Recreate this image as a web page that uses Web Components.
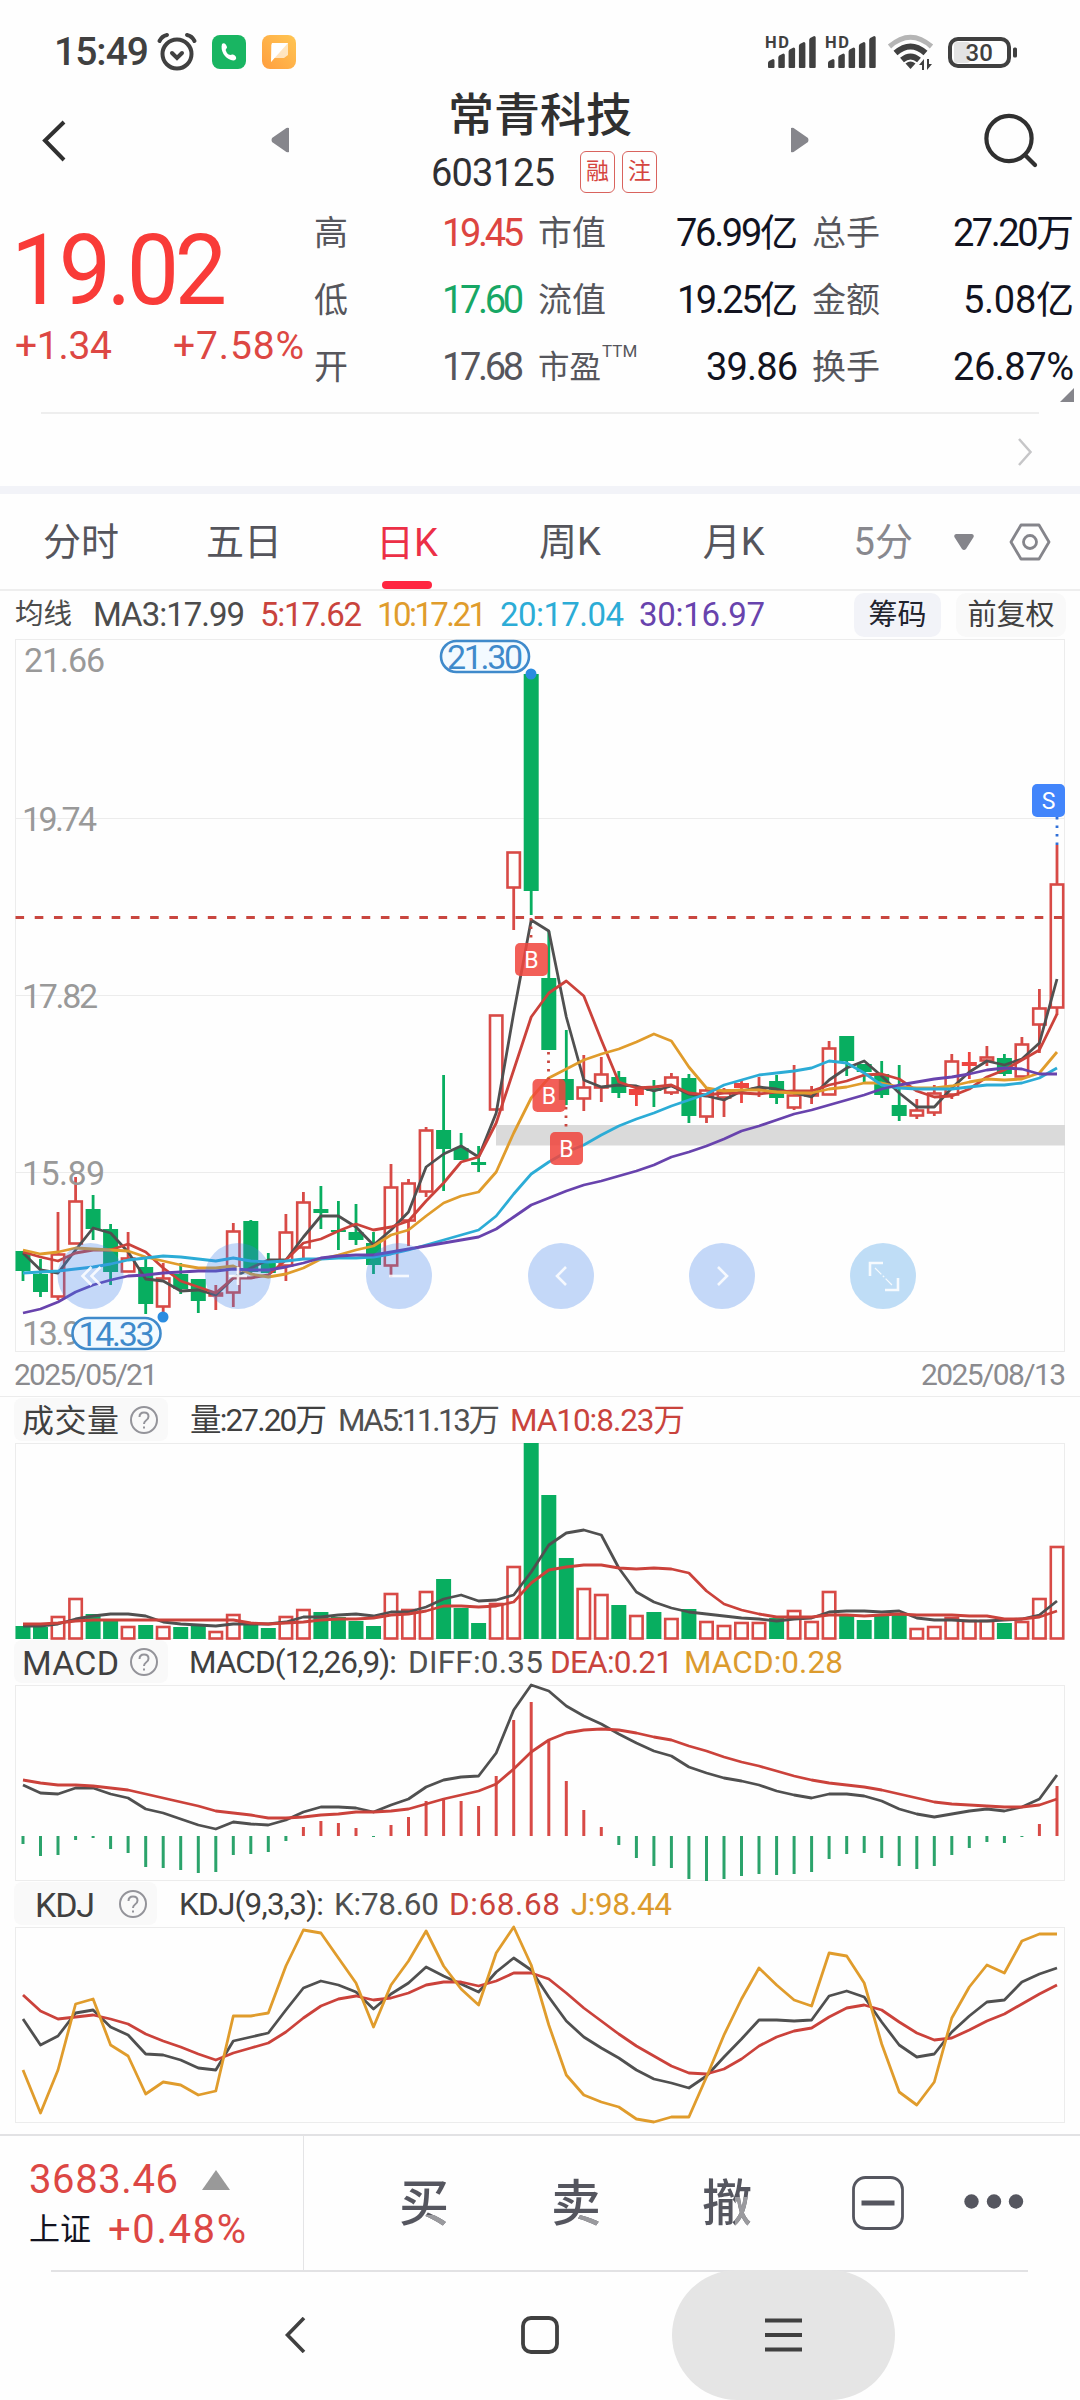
<!DOCTYPE html>
<html lang="zh-CN">
<head>
<meta charset="utf-8">
<title>常青科技 603125</title>
<style>
  body {
    margin: 0;
    width: 1080px;
    height: 2400px;
    overflow: hidden;
    background: #fefefe;
    color: #303033;
    font-family: Roboto, "Noto Sans CJK SC", sans-serif;
  }
</style>
</head>
<body>
<status-bar></status-bar>
<stock-header></stock-header>
<quote-panel></quote-panel>
<period-tabs></period-tabs>
<ma-legend></ma-legend>
<k-chart></k-chart>
<indicator-panel name="成交量" kind="volume" tag="154" label="97" size="32">
  <fit-text w="137" style="margin-left:22px">量:27.20万</fit-text>
  <fit-text w="162" style="margin-left:11px;color:#505050">MA5:11.13万</fit-text>
  <fit-text w="175" style="margin-left:10px;color:#c9433c">MA10:8.23万</fit-text>
</indicator-panel>
<indicator-panel name="MACD" kind="macd" tag="154" label="97" size="34">
  <fit-text w="208" style="margin-left:21px">MACD(12,26,9):</fit-text>
  <fit-text w="135" style="margin-left:11px;color:#505050">DIFF:0.35</fit-text>
  <fit-text w="123" style="margin-left:7px;color:#c9433c">DEA:0.21</fit-text>
  <fit-text w="159" style="margin-left:11px;color:#dc9b2d">MACD:0.28</fit-text>
</indicator-panel>
<indicator-panel name="KDJ" kind="kdj" tag="143" label="60" size="34">
  <fit-text w="145" style="margin-left:22px">KDJ(9,3,3):</fit-text>
  <fit-text w="105" style="margin-left:10px;color:#505050">K:78.60</fit-text>
  <fit-text w="111" style="margin-left:10px;color:#c9433c">D:68.68</fit-text>
  <fit-text w="101" style="margin-left:11px;color:#dc9b2d">J:98.44</fit-text>
</indicator-panel>
<trade-bar></trade-bar>
<nav-bar></nav-bar>

<script>
const RED = '#d84a46';
const GREEN = '#08ae60';
const DARK = '#505050';
const LINE_RED = '#cb423b';
const ORANGE = '#e09c2c';
const CYAN = '#2cacd6';
const PURPLE = '#6843ad';

// x of the candle number i
const px = (i) => (23 + i * 17.525).toFixed(1);
const nums = (s) => s.trim().split(/\s+/).map(Number);

function line(values, color) {
  const pts = nums(values).map((y, i) => `${px(i)},${y}`).join(' ');
  return `<polyline points="${pts}" fill="none" stroke="${color}" stroke-width="2.8" stroke-linejoin="round"/>`;
}

function frame(top, bottom) {
  return `<rect x="15.5" y="${top + 0.5}" width="1049" height="${bottom - top}" fill="none" stroke="#ececec"/>`;
}

// r = hollow red, f = filled red, g = green: body top, body bottom, high, low
const CANDLES = `g 1251 1271 1251 1281|g 1274 1292 1259 1297|r 1254 1297 1212 1300|r 1201 1244 1177 1244|g 1209 1229 1195 1240
|g 1229 1272 1224 1285|r 1258 1272 1232 1272|g 1267 1304 1259 1314|r 1278 1307 1263 1315|g 1274 1289 1263 1294
|g 1279 1301 1279 1313|r 1293 1296 1285 1310|r 1231 1293 1223 1307|g 1221 1272 1220 1275|g 1262 1273 1253 1273
|r 1232 1266 1214 1281|r 1202 1248 1192 1258|g 1209 1213 1186 1229|g 1230 1232 1201 1250|g 1232 1240 1204 1245
|g 1243 1265 1232 1274|r 1187 1266 1164 1277|r 1183 1221 1179 1246|r 1130 1192 1127 1197|g 1130 1149 1075 1191
|g 1148 1160 1133 1160|g 1162 1165 1146 1172|r 1015 1110 1015 1110|r 852 888 852 930|g 674 891 674 915
|g 978 1050 931 1050|g 1079 1100 1030 1105|r 1087 1099 1055 1111|r 1074 1088 1057 1102|g 1077 1093 1071 1098
|f 1089 1095 1087 1106|g 1088 1091 1080 1107|r 1077 1093 1073 1095|g 1078 1116 1074 1123|r 1090 1117 1087 1123
|r 1090 1098 1088 1117|f 1083 1088 1080 1103|r 1088 1090 1077 1097|g 1081 1098 1075 1104|r 1095 1108 1065 1110
|r 1093 1096 1086 1104|r 1048 1095 1041 1095|g 1036 1061 1036 1076|g 1064 1072 1064 1084|g 1074 1095 1061 1098
|g 1105 1116 1065 1121|r 1110 1116 1099 1119|r 1093 1113 1085 1116|r 1061 1095 1054 1099|f 1062 1066 1052 1079
|r 1057 1061 1046 1066|g 1058 1074 1054 1076|r 1044 1077 1037 1077|r 1008 1025 989 1053|r 884 1008 845 1015`
  .split('|').map((c) => c.trim().split(' '));

const MA = [
  [`1253 1270 1273 1250 1228 1233 1252 1279 1281 1291 1290 1295 1278 1268 1260 1260 1237 1216 1216 1227
    1245 1230 1212 1167 1154 1146 1157 1113 1013 920 931 1017 1080 1087 1085 1086 1091 1086 1094 1096
    1100 1091 1087 1089 1093 1097 1080 1068 1061 1076 1093 1107 1107 1088 1072 1061 1065 1059 1043 979`, DARK],
  [`1252 1257 1261 1253 1250 1250 1244 1252 1268 1281 1287 1293 1278 1278 1275 1260 1243 1239 1231 1224
    1230 1227 1221 1201 1183 1162 1157 1123 1070 1017 993 981 996 1040 1082 1088 1087 1085 1093 1095
    1093 1093 1094 1092 1091 1091 1085 1081 1075 1074 1079 1091 1097 1096 1089 1077 1070 1060 1050 1014`, LINE_RED],
  [`1250 1254 1252 1248 1249 1250 1251 1257 1261 1265 1268 1268 1266 1274 1277 1274 1268 1259 1255 1250
    1246 1235 1230 1216 1203 1196 1192 1172 1133 1098 1078 1069 1060 1054 1049 1042 1034 1041 1067 1088
    1091 1090 1090 1092 1093 1093 1089 1087 1083 1083 1087 1088 1088 1086 1082 1079 1080 1079 1073 1052`, ORANGE],
  [`1273 1272 1271 1269 1267 1264 1260 1258 1256 1257 1259 1261 1258 1261 1262 1261 1259 1259 1258 1258
    1257 1254 1250 1245 1240 1235 1230 1216 1194 1174 1162 1152 1145 1135 1126 1119 1113 1106 1100 1094
    1085 1080 1075 1073 1071 1068 1061 1063 1073 1085 1088 1089 1089 1089 1087 1085 1085 1083 1078 1068`, CYAN],
  [`1313 1309 1302 1292 1285 1280 1276 1275 1273 1272 1271 1271 1269 1270 1270 1267 1263 1258 1256 1255
    1255 1252 1249 1246 1243 1240 1237 1229 1217 1205 1198 1191 1185 1181 1176 1171 1165 1157 1152 1146
    1139 1131 1126 1120 1114 1110 1105 1100 1095 1089 1085 1082 1079 1077 1074 1070 1068 1069 1074 1074`, PURPLE]
];

const VOLUME = nums(`1626 1627 1616 1598 1614 1620 1626 1625 1626 1627 1625 1631 1614 1625 1628 1616 1609 1612 1617 1621
  1626 1593 1609 1591 1579 1608 1623 1603 1566 1443 1495 1558 1588 1594 1605 1615 1612 1618 1609 1621
  1625 1622 1622 1618 1610 1621 1591 1615 1620 1614 1614 1628 1626 1617 1620 1620 1623 1621 1598 1546`);

const MACD = nums(`1844 1856 1855 1840 1838 1849 1853 1867 1868 1870 1873 1872 1855 1854 1852 1841 1827 1821 1823 1828
  1837 1825 1817 1801 1798 1801 1806 1776 1720 1702 1740 1781 1810 1827 1845 1858 1866 1868 1879 1881
  1879 1876 1874 1875 1874 1872 1859 1854 1853 1858 1866 1869 1866 1855 1848 1842 1843 1837 1824 1786`);

const CHARTS = {
  volume() {
    return frame(1443, 1638) + VOLUME.map((top, i) => {
      const x = Number(px(i));
      if (CANDLES[i][0] === 'g') return `<rect x="${x - 7.5}" y="${top}" width="15" height="${1639 - top}" fill="${GREEN}"/>`;
      return `<rect x="${x - 6.2}" y="${top + 1}" width="12.4" height="${1637.5 - top}" fill="#fefefe" stroke="${RED}" stroke-width="2.6"/>`;
    }).join('') + line(`1626 1626 1624 1619 1616 1614 1614 1616 1622 1624 1625 1626 1624 1624 1624 1622 1617 1617 1615 1614
      1616 1612 1612 1607 1599 1595 1601 1600 1595 1572 1545 1533 1530 1535 1568 1592 1602 1608 1612 1614
      1616 1618 1619 1621 1619 1618 1612 1611 1611 1612 1611 1618 1620 1620 1621 1621 1620 1619 1615 1601`, DARK)
      + line(`1624 1624 1623 1621 1620 1620 1620 1620 1620 1620 1620 1620 1620 1623 1624 1623 1622 1620 1619 1619
      1618 1615 1614 1611 1606 1606 1607 1606 1602 1583 1570 1567 1565 1565 1568 1569 1568 1569 1573 1591
      1604 1610 1614 1617 1617 1617 1615 1615 1616 1615 1614 1615 1615 1615 1616 1616 1619 1619 1617 1611`, LINE_RED);
  },
  macd() {
    return frame(1685, 1880) + MACD.map((y, i) =>
      `<path d="M${px(i)} 1836V${y}" stroke="${y > 1836 ? '#2ba36b' : RED}" stroke-width="3"/>`).join('')
      + line(`1785 1793 1794 1788 1788 1794 1798 1809 1813 1819 1825 1829 1822 1824 1825 1820 1812 1807 1807 1808
      1812 1805 1799 1787 1780 1777 1776 1753 1710 1685 1691 1706 1716 1724 1734 1743 1751 1756 1767 1773
      1778 1781 1785 1791 1795 1798 1794 1794 1796 1801 1809 1814 1817 1814 1811 1809 1811 1807 1799 1775`, DARK)
      + line(`1780 1783 1785 1785 1786 1788 1790 1794 1798 1802 1806 1811 1813 1815 1818 1818 1817 1815 1814 1812
      1812 1811 1809 1804 1799 1795 1791 1784 1769 1752 1740 1733 1730 1729 1730 1733 1737 1740 1746 1751
      1757 1762 1766 1771 1776 1780 1783 1785 1787 1790 1794 1798 1802 1804 1805 1806 1807 1807 1805 1799`, LINE_RED);
  },
  kdj() {
    return frame(1927, 2122)
      + line(`2019 2045 2036 2013 2010 2027 2035 2054 2055 2060 2068 2070 2041 2037 2033 2010 1988 1981 1985 1992
      2009 1994 1983 1967 1976 1984 1992 1972 1958 1970 1997 2021 2037 2048 2058 2070 2079 2083 2088 2076
      2057 2039 2020 2020 2021 2020 1996 1991 1997 2022 2045 2057 2054 2032 2016 2002 2000 1982 1974 1968`, DARK)
      + line(`1995 2011 2019 2017 2015 2019 2024 2034 2041 2047 2054 2060 2053 2048 2043 2032 2018 2006 1999 1996
      2000 1998 1993 1985 1982 1982 1986 1981 1973 1973 1979 1993 2008 2021 2034 2046 2056 2066 2073 2074
      2069 2059 2046 2037 2031 2028 2017 2008 2005 2010 2022 2033 2040 2038 2030 2021 2014 2004 1994 1985`, LINE_RED)
      + line(`2070 2113 2070 2004 1999 2045 2056 2094 2082 2085 2095 2091 2016 2016 2013 1966 1930 1933 1958 1983
      2027 1985 1961 1931 1966 1989 2005 1953 1927 1965 2025 2075 2095 2102 2107 2119 2122 2117 2117 2077
      2035 1999 1968 1985 2000 2006 1953 1956 1983 2044 2092 2105 2082 2018 1987 1965 1973 1941 1934 1934`, ORANGE);
  }
};

class StatusBar extends HTMLElement {
  constructor() {
    super();
    this.attachShadow({ mode: 'open' });
    // bars with a slanted top
    const bars = [8, 13.5, 19.5, 25, 31].map((h, i) => {
      const x = 3 + i * 10.3;
      return `<path d="M${x} 33V${37 - h}q0-1 1-2l4-2q1.500 0 1.500 1.500V33q0 1-1 1h-4.500q-1 0-1-1z" fill="#404040"/>`;
    }).join('');
    const signal = `<svg width="50" height="36" viewBox="0 0 50 36"><text x="0" y="13.500" font-size="16.500" font-weight="700" fill="#404040" textLength="24">HD</text>${bars}</svg>`;
    this.shadowRoot.innerHTML = `
      <style>
        :host { display: flex; align-items: center; height: 104px; padding: 0 61px 0 54px; box-sizing: border-box; color: #404040; }
        .time { font-size: 39px; font-weight: 500; line-height: 40px; }
        .left, .right { display: flex; align-items: center; }
        .right { margin-left: auto; }
        svg { display: block; overflow: visible; }
      </style>
      <div class="left">
        <fit-text class="time" w="95">15:49</fit-text>
        <svg style="margin-left:8px" width="40" height="38" viewBox="0 0 40 38" fill="none" stroke="#404040" stroke-width="4" stroke-linecap="round">
          <circle cx="20" cy="21" r="14.500"/><path d="M2.500 8Q5 3 10 2M37.500 8Q35 3 30 2"/><path d="M15 20l5 5 5-5"/>
        </svg>
        <svg style="margin-left:15px" width="34" height="34" viewBox="0 0 34 34">
          <rect width="34" height="34" rx="8" fill="#19b562"/>
          <path d="M10 9c2-2 4 0 5 3 0 2-2 2-1 4 1 3 3 4 5 4 2-1 4 0 5 2 1 3-2 4-5 3-6-2-11-9-9-16z" fill="#fff"/>
        </svg>
        <svg style="margin-left:16px" width="34" height="34" viewBox="0 0 34 34">
          <defs><linearGradient id="o" x1="1" y1="0" x2="0" y2="1"><stop stop-color="#ffc653"/><stop offset="1" stop-color="#ff9e3f"/></linearGradient></defs>
          <rect width="34" height="34" rx="8" fill="url(#o)"/>
          <path d="M10 8h16v12l-4 3H12l-3 4V10z" fill="#fff" opacity=".65"/><path d="M10 8h16L9 27z" fill="#fff"/>
        </svg>
      </div>
      <div class="right">
        ${signal}<div style="width:10px"></div>${signal}
        <svg style="margin-left:12px" width="48" height="36" viewBox="0 0 48 36" fill="none" stroke-width="6">
          <path d="M2.500 12.500Q23.500-6 44.500 12.500" stroke="#b5b5b5" stroke-width="5"/><path d="M8.500 19q15-13 30 0M15 26q8.500-7 17 0" stroke="#404040"/>
          <path d="M23.500 35l-5-5.500q5-4 10 0z" fill="#404040"/>
          <path d="M37 36V25l-5 6h3v5zM40 25v11l5-6h-3v-5z" fill="#404040"/>
        </svg>
        <svg style="margin-left:13px" width="71" height="31" viewBox="0 0 71 31">
          <rect x="6" y="5" width="16" height="21" rx="3" fill="#e3e3e3"/>
          <rect x="2" y="2" width="59" height="27" rx="8" fill="none" stroke="#404040" stroke-width="4"/>
          <rect x="65" y="10.500" width="4" height="10" rx="1.500" fill="#404040"/>
          <text x="17.500" y="24" font-size="24" font-weight="500" fill="#404040">30</text>
        </svg>
      </div>`;
  }
}

class StockHeader extends HTMLElement {
  constructor() {
    super();
    this.attachShadow({ mode: 'open' });
    this.shadowRoot.innerHTML = `
      <style>
        :host { display: flex; height: 94px; padding: 0 42px; align-items: flex-start; box-sizing: border-box; }
        .middle { width: 239px; display: flex; flex-direction: column; margin: -16px 129px 0 143px; }
        .title { font-size: 46px; font-weight: 500; line-height: 54px; color: #303030; margin-left: 16px; }
        .code { display: flex; align-items: center; font-size: 38px; line-height: 44px; height: 42px; margin-top: 9px; margin-left: -1px; }
        .code fit-text { margin-top: 2px; }
        .badge { box-sizing: border-box; width: 35px; height: 42px; margin-left: 7px; border: 1.5px solid #d9635e; border-radius: 6px;
          font-size: 23px; line-height: 40px; text-align: center; color: #d5453f; }
        .badge.first { margin-left: 25px; }
        svg { display: block; flex: none; }
      </style>
      <svg style="margin-top:16px" width="24" height="42" viewBox="0 0 24 42"><path d="M22 2L3 20.500L22 40" fill="none" stroke="#303030" stroke-width="4"/></svg>
      <svg style="margin-left:205px;margin-top:23px" width="18" height="26" viewBox="0 0 18 26"><path d="M18 1v24q-2 1-4-1L1 15q-1-2 0-4L14 2q2-2 4-1z" fill="#86868c"/></svg>
      <div class="middle">
        <div class="title">常青科技</div>
        <div class="code"><fit-text w="124">603125</fit-text><span class="badge first">融</span><span class="badge">注</span></div>
      </div>
      <svg style="margin-left:-9px;margin-top:23px" width="18" height="26" viewBox="0 0 18 26"><path d="M0 1v24q2 1 4-1l13-9q1-2 0-4L4 2Q2 0 0 1z" fill="#86868c"/></svg>
      <svg style="margin-left:174px;margin-top:8px" width="55" height="56" viewBox="0 0 55 56" fill="none" stroke="#303030" stroke-width="4.200" stroke-linecap="round"><circle cx="26" cy="26.500" r="22.600"/><path d="M42 43l10 10"/></svg>`;
  }
}

// One label/value pair; the label goes in the slot
class QuoteCell extends HTMLElement {
  constructor() {
    super();
    this.attachShadow({ mode: 'open' });
  }
  connectedCallback() {
    this.shadowRoot.innerHTML = `
      <style>
        :host { display: flex; justify-content: space-between; align-items: center; height: 67px; line-height: 67px; font-size: 34px; color: #56565c; }
        .value { font-size: 38px; margin-right: -2px; color: ${this.getAttribute('color') || '#12131f'}; }
      </style>
      <span><slot></slot></span><fit-text class="value" w="${this.getAttribute('w')}">${this.getAttribute('value')}</fit-text>`;
  }
}

class QuotePanel extends HTMLElement {
  constructor() {
    super();
    this.attachShadow({ mode: 'open' });
    this.shadowRoot.innerHTML = `
      <style>
        :host { display: block; height: 296px; }
        .top { display: flex; height: 205px; }
        .price { width: 314px; color: #f93b38; }
        .now { font-size: 98px; line-height: 84px; margin: 31px 0 0 11px; }
        .diff { display: flex; justify-content: space-between; font-size: 39px; line-height: 42px; margin: 12px 10px 0 15px; color: #dd4743; }
        .grid { display: grid; grid-template-columns: 208px 258px 260px; column-gap: 16px; height: 201px; margin-top: 1.500px; }
        sup { font-size: 17px; line-height: 1; vertical-align: 21px; margin-left: 1px; }
        .more { position: absolute; left: 1060px; top: 388px; }
        .rule { height: 2px; background: #eee; margin: 9px 41px 0; }
        .link { display: flex; justify-content: flex-end; align-items: center; height: 72px; padding: 3px 47px 0 0; box-sizing: border-box; }
        .band { height: 8px; background: #f2f3f8; }
        svg { display: block; }
      </style>
      <div class="top">
        <div class="price">
          <fit-text class="now" w="216" squeeze=".95">19.02</fit-text>
          <div class="diff"><fit-text w="97">+1.34</fit-text><fit-text w="131">+7.58%</fit-text></div>
        </div>
        <div class="grid">
          <quote-cell value="19.45" w="82" color="#dd4540">高</quote-cell>
          <quote-cell value="76.99亿" w="122">市值</quote-cell>
          <quote-cell value="27.20万" w="121">总手</quote-cell>
          <quote-cell value="17.60" w="82" color="#17a765">低</quote-cell>
          <quote-cell value="19.25亿" w="121">流值</quote-cell>
          <quote-cell value="5.08亿" w="111">金额</quote-cell>
          <quote-cell value="17.68" w="82" color="#56565c">开</quote-cell>
          <quote-cell value="39.86" w="92"><span style="font-size:31.500px">市盈</span><sup>TTM</sup></quote-cell>
          <quote-cell value="26.87%" w="121">换手</quote-cell>
        </div>
      </div>
      <svg class="more" width="14" height="14" viewBox="0 0 14 14"><path d="M14 0v14H0z" fill="#85858b"/></svg>
      <div class="rule"></div>
      <div class="link"><svg width="16" height="30" viewBox="0 0 16 30"><path d="M2 2l11.500 13L2 28" fill="none" stroke="#c6c6c8" stroke-width="2.500"/></svg></div>
      <div class="band"></div>`;
  }
}

class PeriodTabs extends HTMLElement {
  constructor() {
    super();
    this.attachShadow({ mode: 'open' });
    this.shadowRoot.innerHTML = `
      <style>
        :host { display: flex; align-items: center; height: 97px; padding-left: 43px; box-sizing: border-box; border-bottom: 2px solid #eee;
          font-size: 38px; line-height: 98px; color: #55555c; }
        .tab { margin-right: 87px; }
        .k { margin-right: 97px; }
        .active { color: #ec2f46; height: 95px; margin-right: 101px; }
        .active::after { content: ""; display: block; width: 50px; height: 8px; margin: -11px 0 0 6px; border-radius: 4px; background: #ff2641; }
        .more { color: #88888e; }
        svg { display: block; }
      </style>
      <span class="tab">分时</span>
      <span class="tab" style="margin-right:94px">五日</span>
      <span class="active">日K</span>
      <span class="k">周K</span>
      <span class="k" style="margin-right:89px;margin-left:5px">月K</span>
      <span class="more">5分</span>
      <svg style="margin-left:41px" width="20" height="16" viewBox="0 0 20 16"><path d="M2 0h16q3 1 1 4l-7 11q-2 2-4 0L1 4q-2-3 1-4z" fill="#85858b"/></svg>
      <svg style="margin-left:35px" width="42" height="38" viewBox="0 0 42 38" fill="none" stroke="#85858b" stroke-width="2.800"><path d="M12 2h18l10 17-10 17H12L2 19z" stroke-linejoin="round"/><circle cx="21" cy="19" r="6.500"/></svg>`;
  }
}

class MaLegend extends HTMLElement {
  constructor() {
    super();
    this.attachShadow({ mode: 'open' });
    this.shadowRoot.innerHTML = `
      <style>
        :host { display: flex; align-items: center; height: 48px; padding: 0 14px 0 15px; font-size: 33px; line-height: 44px; color: #4c4c4c; }
        .name { font-size: 28.500px; }
        .btn { box-sizing: border-box; height: 44px; border-radius: 10px; font-size: 29px; line-height: 44px; text-align: center; color: #22232e; }
      </style>
      <span class="name">均线</span>
      <fit-text w="152" style="margin-left:21px">MA3:17.99</fit-text>
      <fit-text w="102" style="margin-left:15px;color:#c9433c">5:17.62</fit-text>
      <fit-text w="110" style="margin-left:15px;color:${ORANGE}">10:17.21</fit-text>
      <fit-text w="124" style="margin-left:13px;color:${CYAN}">20:17.04</fit-text>
      <fit-text w="126" style="margin-left:15px;color:${PURPLE}">30:16.97</fit-text>
      <span class="btn" style="width:87px;margin-left:auto;background:#f2f3f8">筹码</span>
      <span class="btn" style="width:110px;margin-left:15px;background:#f9f9f9;color:#404040">前复权</span>`;
  }
}

class KChart extends HTMLElement {
  constructor() {
    super();
    this.attachShadow({ mode: 'open' });
    this.shadowRoot.innerHTML = `
      <style>
        :host { display: block; height: 759px; }
        svg { display: block; overflow: visible; }
        .axis { font-size: 34px; fill: #999; }
        .bubble { font-size: 34px; fill: #3f8acb; }
        .tag { font-size: 23px; fill: #fff; text-anchor: middle; }
        .dates { display: flex; justify-content: space-between; padding: 0 14px; height: 45px; line-height: 46px; font-size: 30px; color: #8b8b8f;
          border-bottom: 1px solid #ececec; box-sizing: border-box; }
      </style>
      <svg width="1080" height="713" viewBox="0 639 1080 713">
        ${frame(639, 1351)}
        <path d="M16 818.500H1065M16 995.500H1065M16 1172.500H1065" stroke="#ececec"/>
        <rect x="496" y="1125" width="569" height="20.500" fill="#dadada"/>
        ${this.candles()}
        <g class="axis">
          <text x="24" y="672" textLength="81">21.66</text>
          <text x="22" y="831" textLength="75">19.74</text>
          <text x="22" y="1008" textLength="76">17.82</text>
          <text x="22" y="1185" textLength="83">15.89</text>
          <text x="22" y="1345" textLength="76">13.97</text>
        </g>
        <path d="M15.500 917.500H1065" stroke="#c9463f" stroke-width="2.800" stroke-dasharray="8.600 10.630"/>
        ${MA.map(([v, c]) => line(v, c)).join('')}
        <g fill="none" stroke-width="2.800" stroke-dasharray="2.500 6">
          <path d="M531 918V943M548.500 1052V1079M566 1107V1132" stroke="#c9463f"/>
          <path d="M1057 817V845" stroke="#2f6fd8"/>
        </g>
        ${this.tags()}
        ${this.bubble(441, 641, '21.30', 531, 674)}
        ${this.bubble(72.5, 1318, '14.33', 163, 1317)}
        ${this.buttons()}
      </svg>
      <div class="dates"><fit-text w="144">2025/05/21</fit-text><fit-text w="145">2025/08/13</fit-text></div>`;
  }

  candles() {
    return CANDLES.map(([kind, top, bottom, high, low], i) => {
      const x = Number(px(i));
      const color = kind === 'g' ? GREEN : kind === 'f' ? '#ee4540' : RED;
      const wick = `<path d="M${x} ${high}V${top}M${x} ${bottom}V${low}" stroke="${color}" stroke-width="2.800"/>`;
      if (kind === 'r') return wick + `<rect x="${x - 6.2}" y="${+top + 0.5}" width="12.400" height="${Math.max(bottom - top - 1, 1)}" fill="none" stroke="${color}" stroke-width="2.600"/>`;
      return wick + `<rect x="${x - 7.5}" y="${top}" width="15" height="${bottom - top}" fill="${color}"/>`;
    }).join('');
  }

  tags() {
    const tag = (x, y, t, fill) => `<rect x="${x}" y="${y}" width="33" height="33" rx="5" fill="${fill}"/><text class="tag" x="${x + 16.5}" y="${y + 24.5}">${t}</text>`;
    const buy = '#f0453ddc';
    return tag(515, 943, 'B', buy) + tag(532.5, 1079, 'B', buy) + tag(550, 1132, 'B', buy) + tag(1032, 784, 'S', '#4285fb');
  }

  bubble(x, y, text, cx, cy) {
    return `<rect x="${x}" y="${y}" width="88" height="31" rx="15.500" fill="#f3faff" stroke="#3f8acb" stroke-width="2.600"/>
      <text class="bubble" x="${x + 6}" y="${y + 27.5}" textLength="76">${text}</text><circle cx="${cx}" cy="${cy}" r="5.500" fill="#2b8ce0"/>`;
  }

  buttons() {
    const icons = [
      [90.500, 'M1-9l-9 9 9 9M10-9L1 0l9 9'], [238, 'M-9 0H9M0-9V9'], [399, 'M-10 0H10'],
      [561, 'M5-9l-9 9 9 9'], [722, 'M-4-9l9 9-9 9'], [883, 'M-13 0V-13H0M15 2V14H2']
    ];
    return icons.map(([x, d], i) => `<g transform="translate(${x} 1276)"><circle r="33" fill="${i === 5 ? '#2f93e3' : '#3f82eb'}" opacity=".3"/><path d="${d}" fill="none" stroke="#fff" stroke-width="2.600" opacity=".85"/></g>`).join('')
      + '<path d="M875 1268l18 18" stroke="#fff" stroke-width="1.200" stroke-dasharray="9 2 2 2" opacity=".85"/>';
  }
}

// Header row with the indicator name and the slotted legend, then its chart
class IndicatorPanel extends HTMLElement {
  constructor() {
    super();
    this.attachShadow({ mode: 'open' });
  }
  connectedCallback() {
    const kind = this.getAttribute('kind');
    const top = { volume: 1441, macd: 1683, kdj: 1925 }[kind];
    this.shadowRoot.innerHTML = `
      <style>
        :host { display: block; height: 242px; }
        .head { display: flex; align-items: center; height: 43px; margin-left: 14px; font-size: 31.500px; line-height: 43px; color: #404040; }
        .name { display: flex; align-items: center; justify-content: space-between; box-sizing: border-box; width: ${this.getAttribute('tag')}px; height: 43px;
          padding: 0 10px 0 ${kind === 'kdj' ? 21 : 8}px; border-radius: 8px; background: #f9f9f9; font-size: ${this.getAttribute('size')}px; }
        .name fit-text { margin-top: 3px; }
        .legend { display: flex; margin-top: 1px; }
        svg { display: block; overflow: visible; }
      </style>
      <div class="head">
        <div class="name"><fit-text w="${this.getAttribute('label')}">${this.getAttribute('name')}</fit-text>
          <svg width="28" height="28" viewBox="0 0 28 28" fill="none" stroke="#94949a" stroke-width="2"><circle cx="14" cy="14" r="13"/><path d="M9.500 11q0-4.500 4.500-4.500t4.500 4q0 2.500-2.500 4-2 1.300-2 3.500M14 20.500v2"/></svg>
        </div>
        <div class="legend"><slot></slot></div>
      </div>
      <svg width="1080" height="199" viewBox="0 ${top} 1080 199">${CHARTS[kind]()}</svg>`;
  }
}

class TradeBar extends HTMLElement {
  constructor() {
    super();
    this.attachShadow({ mode: 'open' });
    this.shadowRoot.innerHTML = `
      <style>
        :host { display: flex; height: 136px; margin-top: 10px; box-sizing: border-box; border-top: 2px solid #e2e2e4; }
        .index { width: 274px; padding: 21px 0 0 29px; border-right: 1px solid #e4e4e6; font-size: 40px; line-height: 46px; color: #dc4744; flex: none; }
        .row { display: flex; align-items: center; }
        .row + .row { margin-top: 4px; }
        .sh { font-size: 31px; color: #12131f; }
        .op { width: 50px; margin-top: 37px; height: 62px; font-size: 50px; line-height: 62px; font-weight: 500; color: transparent;
          -webkit-background-clip: text; background-clip: text;
          background-image: linear-gradient(#9a9a9e, #9a9a9e), linear-gradient(#55565f, #55565f);
          background-size: 23px 17px, 100% 100%; background-position: 100% 42px, 0 0; background-repeat: no-repeat; }
        .op.undo { background-size: 17px 38px, 100% 100%; background-position: 100% 24px, 0 0; }
        svg { display: block; }
      </style>
      <div class="index">
        <div class="row"><fit-text w="149">3683.46</fit-text><svg style="margin-left:24px" width="28" height="20" viewBox="0 0 28 20"><path d="M14 0l14 20H0z" fill="#999"/></svg></div>
        <div class="row"><span class="sh">上证</span><fit-text w="138" style="margin-left:17px">+0.48%</fit-text></div>
      </div>
      <div class="op" style="margin-left:95px">买</div>
      <div class="op" style="margin-left:102px">卖</div>
      <div class="op undo" style="margin-left:101px">撤</div>
      <svg style="margin:40px 0 0 100px" width="52" height="54" viewBox="0 0 52 54"><rect x="1.500" y="1.500" width="49" height="51" rx="12" fill="none" stroke="#55565f" stroke-width="2.800"/><path d="M9.500 27h33" stroke="#55565f" stroke-width="5"/></svg>
      <svg style="margin:58px 0 0 60px" width="60" height="15" viewBox="0 0 60 15" fill="#55565f"><circle cx="7.500" cy="7.500" r="7.200"/><circle cx="30" cy="7.500" r="7.200"/><circle cx="52" cy="7.500" r="7.200"/></svg>`;
  }
}

class NavBar extends HTMLElement {
  constructor() {
    super();
    this.attachShadow({ mode: 'open' });
    this.shadowRoot.innerHTML = `
      <style>
        :host { display: flex; align-items: center; height: 130px; background: linear-gradient(#e2e2e4, #e2e2e4) 51px 0 / 977px 2px no-repeat; }
        .pressed { display: flex; align-items: center; justify-content: center; width: 223px; height: 130px; margin-left: 113px; border-radius: 65px; background: #e5e5e5; }
        svg { display: block; }
      </style>
      <svg style="margin-left:284px" width="22" height="36" viewBox="0 0 22 36"><path d="M20 1L3.500 18 20 35" fill="none" stroke="#404040" stroke-width="3.600"/></svg>
      <svg style="margin-left:215px" width="38" height="38" viewBox="0 0 38 38"><rect x="2" y="2" width="34" height="34" rx="8" fill="none" stroke="#404040" stroke-width="3.800"/></svg>
      <div class="pressed"><svg width="37" height="34" viewBox="0 0 37 34"><path d="M0 2.500h37M0 17h37M0 31.500h37" stroke="#404040" stroke-width="3.800"/></svg></div>`;
  }
}

// Text fitted to the width in the w attribute by letter spacing, after a horizontal squeeze if one is given
class FitText extends HTMLElement {
  constructor() {
    super();
    this.attachShadow({ mode: 'open' });
    this.shadowRoot.innerHTML = `
      <style>
        :host { display: block; flex: none; white-space: nowrap; }
        span { display: inline-block; transform-origin: 0 0; }
      </style>
      <span><slot></slot></span>`;
  }
  connectedCallback() {
    const span = this.shadowRoot.querySelector('span');
    const width = Number(this.getAttribute('w'));
    const scale = Number(this.getAttribute('squeeze') || 1);
    const natural = span.getBoundingClientRect().width;
    span.style.letterSpacing = `${(width / scale - natural) / (this.textContent.length - 1)}px`;
    if (scale !== 1) span.style.transform = `scaleX(${scale})`;
    this.style.width = `${width}px`;
  }
}

customElements.define('status-bar', StatusBar);
customElements.define('stock-header', StockHeader);
customElements.define('quote-cell', QuoteCell);
customElements.define('quote-panel', QuotePanel);
customElements.define('period-tabs', PeriodTabs);
customElements.define('ma-legend', MaLegend);
customElements.define('k-chart', KChart);
customElements.define('indicator-panel', IndicatorPanel);
customElements.define('trade-bar', TradeBar);
customElements.define('nav-bar', NavBar);
customElements.define('fit-text', FitText);
</script>
</body>
</html>
